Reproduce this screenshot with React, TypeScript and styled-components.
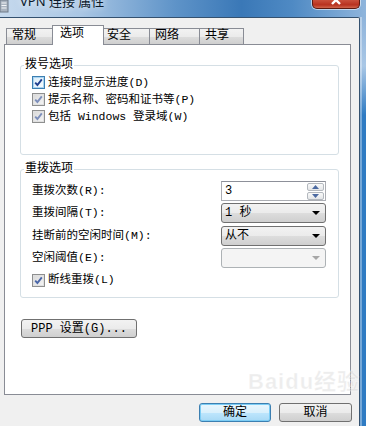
import React from "react";
import styled, { createGlobalStyle, css } from "styled-components";

const GlobalStyle = createGlobalStyle`
  html, body {
    margin: 0;
    padding: 0;
  }
  body {
    width: 366px;
    height: 426px;
    overflow: hidden;
    background: #f0f0f0;
    font-family: "Liberation Mono", "Noto Sans CJK SC", monospace;
    font-size: 12px;
    color: #000;
  }
`;

// Win7 classic-ish palette
const colors = {
  face: "#f0f0f0",
  tabBorder: "#898c95",
  groupBorder: "#d5dfe5",
  btnBorder: "#707070",
  focusBorder: "#3c7fb1",
  frameDark: "#34516f",
  frameBlue: "#2f7bc3",
};

const buttonFace = css`
  background: linear-gradient(
    to bottom,
    #f2f2f2 0%,
    #ebebeb 50%,
    #dddddd 51%,
    #cfcfcf 100%
  );
`;

const Window = styled.div`
  position: relative;
  width: 366px;
  height: 426px;
  display: flex;
  flex-direction: column;
  overflow: hidden;
`;

const TitleBar = styled.div`
  flex: none;
  height: 17px;
  display: flex;
  align-items: flex-start;
  overflow: hidden;
  background: linear-gradient(
    to right,
    #c6d9ed 0%,
    #a9c6e4 22%,
    #5e93c8 48%,
    #3a78b7 66%,
    #4f8ac4 80%,
    #8fb5dc 100%
  );
`;

const TitleIcon = styled.svg`
  flex: none;
  width: 9px;
  height: 13px;
`;

const TitleText = styled.div`
  margin-left: 11px;
  margin-top: -6px;
  font-family: "Noto Sans", "Noto Sans CJK SC", sans-serif;
  font-size: 13px;
  line-height: 14px;
  color: #0b1a2b;
  white-space: nowrap;
  text-shadow: 0 0 6px rgba(255, 255, 255, 0.9);
`;

const CloseButton = styled.div`
  flex: none;
  margin-left: auto;
  margin-right: 6px;
  width: 46px;
  height: 8px;
  border: 1px solid #5e1a10;
  border-top: none;
  border-radius: 0 0 5px 5px;
  background: linear-gradient(to bottom, #c9503c 0%, #b8321f 60%, #d0654c 100%);
  box-shadow: 0 0 0 1px rgba(255, 255, 255, 0.55);
  display: flex;
  justify-content: center;
  overflow: hidden;
`;

const Body = styled.div`
  flex: 1;
  display: flex;
  min-height: 0;
`;

const Client = styled.div`
  width: 360px;
  box-sizing: border-box;
  border-top: 1px solid ${colors.frameDark};
  border-right: 1px solid ${colors.frameDark};
  border-top-right-radius: 2px;
  background: ${colors.face};
  display: flex;
  flex-direction: column;
`;

const Frame = styled.div`
  flex: 1;
  background: linear-gradient(
    to bottom,
    #8fb4db 0%,
    #a9c7e6 12%,
    ${colors.frameBlue} 24%,
    ${colors.frameBlue} 100%
  );
  box-shadow: inset 2px 0 0 rgba(255, 255, 255, 0.35);
`;

const TabStrip = styled.div`
  display: flex;
  align-items: flex-end;
  height: 19px;
  margin-top: 7px;
  padding-left: 6px;
`;

const Tab = styled.div<{ $w: number; $active?: boolean }>`
  box-sizing: border-box;
  width: ${(p) => p.$w}px;
  height: 16px;
  margin-right: -1px;
  padding-left: 5px;
  border: 1px solid ${colors.tabBorder};
  border-bottom: none;
  font-size: 12px;
  line-height: 14px;
  white-space: nowrap;
  ${buttonFace}

  ${(p) =>
    p.$active &&
    css`
      position: relative;
      z-index: 1;
      width: ${p.$w + 4}px;
      height: 20px;
      margin: 0 -3px -1px -2px;
      padding-left: 7px;
      padding-top: 1px;
      background: #fff;
    `}
`;

const Panel = styled.div`
  box-sizing: border-box;
  height: 351px;
  margin: 0 8px 0 4px;
  padding: 13px 11px 0 15px;
  border: 1px solid ${colors.tabBorder};
  background: #fff;
  display: flex;
  flex-direction: column;
  align-items: flex-start;
`;

const Group = styled.fieldset<{ $pt: number; $pb: number }>`
  box-sizing: border-box;
  align-self: stretch;
  margin: 0;
  min-width: 0;
  padding: ${(p) => p.$pt}px 12px ${(p) => p.$pb}px 11px;
  border: 1px solid ${colors.groupBorder};
  border-radius: 3px;

  & + & {
    margin-top: 7px;
  }
`;

const Legend = styled.legend`
  margin-left: -8px;
  padding: 0 1px;
  font-size: 12px;
  line-height: 14px;
`;

const CheckRow = styled.label`
  display: flex;
  align-items: center;
  height: 17px;
  font-size: 11.5px;
  line-height: 14px;
  white-space: nowrap;
`;

const Box = styled.span<{ $tone: "hot" | "normal" | "dim" }>`
  box-sizing: border-box;
  flex: none;
  width: 13px;
  height: 13px;
  margin-right: 3px;
  display: flex;
  align-items: center;
  justify-content: center;
  border: 1px solid ${(p) => (p.$tone === "hot" ? "#3c7fb1" : "#8e8f8f")};
  background: ${(p) =>
    p.$tone === "hot"
      ? "linear-gradient(135deg, #d8ecf8 0%, #fafdff 100%)"
      : "linear-gradient(135deg, #d8d8d8 0%, #f6f6f6 100%)"};
  box-shadow: inset 0 0 0 1px
    ${(p) => (p.$tone === "hot" ? "#a9d3f1" : "#e0e0e0")};
`;

const FieldGrid = styled.div`
  display: grid;
  grid-template-columns: 1fr 105px;
  grid-auto-rows: 20px;
  row-gap: 2.3px;
  align-items: center;
`;

const FieldLabel = styled.span`
  font-size: 11.5px;
  line-height: 14px;
  white-space: nowrap;
`;

const SpinBox = styled.div`
  box-sizing: border-box;
  height: 20px;
  display: flex;
  align-items: center;
  padding: 0 1px 0 3px;
  border: 1px solid #abadb3;
  border-top-color: #8d9099;
  background: #fff;
  font-size: 12px;
`;

const SpinValue = styled.span`
  flex: 1;
`;

const SpinButtons = styled.div`
  display: flex;
  flex-direction: column;
  gap: 1px;
`;

const SpinButton = styled.div`
  box-sizing: border-box;
  width: 17px;
  height: 8px;
  border: 1px solid #b3b8be;
  border-radius: 2px;
  background: linear-gradient(to bottom, #fafafa, #e4e6e8);
  display: flex;
  align-items: center;
  justify-content: center;
`;

const Combo = styled.div<{ $disabled?: boolean }>`
  box-sizing: border-box;
  height: 20px;
  display: flex;
  align-items: center;
  padding: 0 5px 0 3px;
  border: 1px solid ${(p) => (p.$disabled ? "#adb2b5" : colors.btnBorder)};
  border-radius: 3px;
  font-size: 12px;
  line-height: 14px;
  ${(p) => (p.$disabled ? "background: #f4f4f4;" : buttonFace)}
`;

const ComboText = styled.span`
  flex: 1;
  white-space: nowrap;
`;

const Arrow = styled.span<{ $disabled?: boolean }>`
  width: 0;
  height: 0;
  border-left: 4px solid transparent;
  border-right: 4px solid transparent;
  border-top: 4px solid ${(p) => (p.$disabled ? "#a6a6a6" : "#000")};
`;

const Button = styled.div<{ $w: number; $default?: boolean }>`
  box-sizing: border-box;
  width: ${(p) => p.$w}px;
  height: 19px;
  display: flex;
  align-items: center;
  justify-content: center;
  border: 1px solid ${colors.btnBorder};
  border-radius: 3px;
  font-size: 12px;
  line-height: 14px;
  white-space: nowrap;
  ${buttonFace}

  ${(p) =>
    p.$default &&
    css`
      border-color: ${colors.focusBorder};
      background: linear-gradient(
        to bottom,
        #eaf6fd 0%,
        #d9f0fc 50%,
        #bee6fd 51%,
        #a7d9f5 100%
      );
      box-shadow: inset 0 0 0 1px #7ccdf5;
    `}
`;

const PppButton = styled(Button)`
  margin: 21px 0 0 1px;
`;

const Footer = styled.div`
  display: flex;
  justify-content: flex-end;
  gap: 8px;
  margin: 8px 7px 0 0;
`;

const Watermark = styled.div`
  position: absolute;
  left: 248px;
  top: 371px;
  pointer-events: none;
  color: rgba(215, 215, 215, 0.45);
  font-family: "Liberation Sans", "Noto Sans CJK SC", sans-serif;
  font-weight: 700;
  font-size: 22px;
  line-height: 1;
  letter-spacing: 1px;
  -webkit-text-stroke: 0.6px rgba(255, 255, 255, 0.6);
`;

function Check({ tone }: { tone: "hot" | "normal" | "dim" }) {
  const stroke = tone === "hot" ? "#1f3f8f" : tone === "normal" ? "#4a66a8" : "#7d8fbb";
  return (
    <Box $tone={tone}>
      <svg width="9" height="9" viewBox="0 0 9 9">
        <path d="M1.2 4.6 L3.4 7 L7.8 1.4" fill="none" stroke={stroke} strokeWidth="1.9" />
      </svg>
    </Box>
  );
}

const tabs = [
  { label: "常规", w: 49 },
  { label: "选项", w: 48, active: true },
  { label: "安全", w: 49 },
  { label: "网络", w: 51 },
  { label: "共享", w: 45 },
];

export default function App() {
  return (
    <>
      <GlobalStyle />
      <Window>
        <TitleBar>
          <TitleIcon viewBox="0 0 9 13">
            <rect x="0" y="0" width="8" height="12" fill="#a9b3bf" stroke="#6f7b88" />
            <path d="M1.5 3h5M1.5 5.5h5M1.5 8h5" stroke="#f4f6f8" strokeWidth="1" />
          </TitleIcon>
          <TitleText>VPN 连接 属性</TitleText>
          <CloseButton>
            <svg width="10" height="8" viewBox="0 0 10 8">
              <path d="M1 -4 L9 4 M9 -4 L1 4" stroke="#fff" strokeWidth="2.4" />
            </svg>
          </CloseButton>
        </TitleBar>

        <Body>
          <Client>
            <TabStrip>
              {tabs.map((t) => (
                <Tab key={t.label} $w={t.w} $active={t.active}>
                  {t.label}
                </Tab>
              ))}
            </TabStrip>

            <Panel>
              <Group $pt={2} $pb={29}>
                <Legend>拨号选项</Legend>
                <CheckRow>
                  <Check tone="hot" />
                  连接时显示进度(D)
                </CheckRow>
                <CheckRow>
                  <Check tone="dim" />
                  提示名称、密码和证书等(P)
                </CheckRow>
                <CheckRow>
                  <Check tone="dim" />
                  包括 Windows 登录域(W)
                </CheckRow>
              </Group>

              <Group $pt={5} $pb={7}>
                <Legend>重拨选项</Legend>
                <FieldGrid>
                  <FieldLabel>重拨次数(R):</FieldLabel>
                  <SpinBox>
                    <SpinValue>3</SpinValue>
                    <SpinButtons>
                      <SpinButton>
                        <svg width="7" height="4" viewBox="0 0 7 4">
                          <path d="M0 4 L3.5 0 L7 4 Z" fill="#4c6aa1" />
                        </svg>
                      </SpinButton>
                      <SpinButton>
                        <svg width="7" height="4" viewBox="0 0 7 4">
                          <path d="M0 0 L3.5 4 L7 0 Z" fill="#4c6aa1" />
                        </svg>
                      </SpinButton>
                    </SpinButtons>
                  </SpinBox>

                  <FieldLabel>重拨间隔(T):</FieldLabel>
                  <Combo>
                    <ComboText>1 秒</ComboText>
                    <Arrow />
                  </Combo>

                  <FieldLabel>挂断前的空闲时间(M):</FieldLabel>
                  <Combo>
                    <ComboText>从不</ComboText>
                    <Arrow />
                  </Combo>

                  <FieldLabel>空闲阈值(E):</FieldLabel>
                  <Combo $disabled>
                    <ComboText />
                    <Arrow $disabled />
                  </Combo>

                  <CheckRow>
                    <Check tone="normal" />
                    断线重拨(L)
                  </CheckRow>
                </FieldGrid>
              </Group>

              <PppButton $w={116}>PPP 设置(G)...</PppButton>
            </Panel>

            <Footer>
              <Button $w={72} $default>
                确定
              </Button>
              <Button $w={73}>取消</Button>
            </Footer>
          </Client>
          <Frame />
        </Body>

        <Watermark>Baidu经验</Watermark>
      </Window>
    </>
  );
}
